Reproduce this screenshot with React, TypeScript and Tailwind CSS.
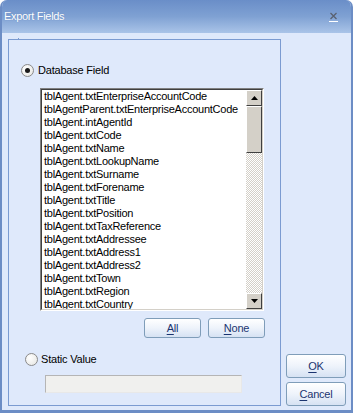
import React from "react";

const fields = [
  "tblAgent.txtEnterpriseAccountCode",
  "tblAgentParent.txtEnterpriseAccountCode",
  "tblAgent.intAgentId",
  "tblAgent.txtCode",
  "tblAgent.txtName",
  "tblAgent.txtLookupName",
  "tblAgent.txtSurname",
  "tblAgent.txtForename",
  "tblAgent.txtTitle",
  "tblAgent.txtPosition",
  "tblAgent.txtTaxReference",
  "tblAgent.txtAddressee",
  "tblAgent.txtAddress1",
  "tblAgent.txtAddress2",
  "tblAgent.txtTown",
  "tblAgent.txtRegion",
  "tblAgent.txtCountry",
];

function Radio({ checked }: { checked?: boolean }) {
  return (
    <span className="grid h-[13px] w-[13px] shrink-0 place-items-center rounded-full border border-[#8a8a8a] bg-[radial-gradient(circle_at_35%_35%,#ffffff,#e4e4e0)]">
      {checked ? <span className="h-[5px] w-[5px] rounded-full bg-[#1a1a1a]" /> : null}
    </span>
  );
}

function Btn({ label, mnemonic, className }: { label: string; mnemonic: string; className: string }) {
  const rest = label.slice(mnemonic.length);
  return (
    <button className={`flex items-center justify-center rounded-[3px] border border-[#7f9db9] bg-gradient-to-b from-white via-[#eef3fb] to-[#d6e2f3] text-[11px] tracking-[-0.2px] text-[#1b3470] ${className}`}>
      <span><span className="underline underline-offset-2">{mnemonic}</span>{rest}</span>
    </button>
  );
}

function ScrollBtn({ up }: { up?: boolean }) {
  return (
    <div className="grid h-[16px] w-[16px] place-items-center border border-t-white border-l-white border-b-[#404040] border-r-[#404040] bg-[#d4d0c8]">
      <svg width="7" height="4" viewBox="0 0 7 4">
        <path d={up ? "M3.5 0 L7 4 L0 4 Z" : "M0 0 L7 0 L3.5 4 Z"} fill="#000" />
      </svg>
    </div>
  );
}

export default function App() {
  return (
    <div
      className="flex h-[413px] w-[353px] flex-col overflow-hidden rounded-t-[7px] border-x-2 border-b-[3px] border-[#6c8dc5] bg-[#dfe9fb] text-black"
      style={{ fontFamily: '"Liberation Sans", Arial, sans-serif' }}
    >
      {/* title bar */}
      <div className="flex h-[33px] shrink-0 items-center justify-between bg-gradient-to-b from-[#6a8ec8] via-[#7fa1d3] to-[#aac4e8] pl-[2px] pr-[12px]">
        <span className="text-[11px] tracking-[-0.3px] text-white [text-shadow:0_0_1px_#5a7fb8]">Export Fields</span>
        <svg width="10" height="10" viewBox="0 0 10 10">
          <path d="M1.5 1 L7.5 7 M7.5 1 L1.5 7" stroke="#5a6270" strokeWidth="1.3" />
          <path d="M0 9.5 H9" stroke="#ffffff" strokeWidth="1" />
        </svg>
      </div>

      <div className="flex flex-1 pl-[6px] pt-[6px]">
        {/* group box */}
        <div className="relative flex h-[367px] w-[273px] flex-col border border-[#7b9bd1]">
          <span className="absolute left-[9px] top-[-2px] h-[2px] w-[1px] bg-[#7b9bd1]" />
          <label className="ml-[12px] mt-[24px] flex h-[13px] items-center gap-[4px] text-[11px] tracking-[-0.2px]">
            <Radio checked />
            <span>Database Field</span>
          </label>

          <div className="ml-[31px] mt-[11px] flex h-[223px] w-[224px] border border-t-[#808080] border-l-[#808080] border-b-white border-r-white">
            <div className="flex flex-1 overflow-hidden border border-t-[#404040] border-l-[#404040] border-b-[#d4d0c8] border-r-[#d4d0c8] bg-white">
              <ul className="flex-1 overflow-hidden pl-[2px] text-[11px] tracking-[-0.25px]">
                {fields.map((f) => (
                  <li key={f} className="h-[13px] whitespace-nowrap leading-[13px]">{f}</li>
                ))}
              </ul>
              <div className="flex w-[16px] flex-col bg-[repeating-conic-gradient(#d4d0c8_0%_25%,#ffffff_0%_50%)] bg-size-[2px_2px]">
                <ScrollBtn up />
                <div className="h-[47px] w-[16px] border border-t-white border-l-white border-b-[#404040] border-r-[#404040] bg-[#d4d0c8]" />
                <div className="flex-1" />
                <ScrollBtn />
              </div>
            </div>
          </div>

          <div className="ml-[135px] mt-[7px] flex gap-[7px]">
            <Btn label="All" mnemonic="A" className="h-[20px] w-[57px]" />
            <Btn label="None" mnemonic="N" className="h-[20px] w-[57px]" />
          </div>

          <label className="ml-[16px] mt-[15px] flex h-[13px] items-center gap-[3px] text-[11px] tracking-[-0.2px]">
            <Radio />
            <span>Static Value</span>
          </label>

          <div className="ml-[36px] mt-[9px] h-[18px] w-[197px] border border-t-[#b5b5b5] border-l-[#b5b5b5] border-b-[#e8e8e8] border-r-[#e8e8e8] bg-[#f0f0ee]" />
        </div>

        {/* right buttons */}
        <div className="flex flex-col justify-end gap-[4px] pb-[4px] pl-[5px]">
          <Btn label="OK" mnemonic="O" className="h-[24px] w-[60px]" />
          <Btn label="Cancel" mnemonic="C" className="h-[24px] w-[60px]" />
        </div>
      </div>
    </div>
  );
}
